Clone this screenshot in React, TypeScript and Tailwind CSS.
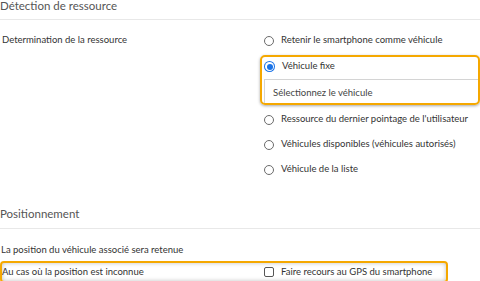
import { useState } from 'react';

const options = [
  'Retenir le smartphone comme véhicule',
  'Véhicule fixe',
  "Ressource du dernier pointage de l'utilisateur",
  'Véhicules disponibles (véhicules autorisés)',
  'Véhicule de la liste',
];

function Radio({ checked }: { checked: boolean }) {
  return checked ? (
    <span className="w-[11px] h-[11px] rounded-full bg-[#1a73e8] flex items-center justify-center shrink-0">
      <span className="w-[9px] h-[9px] rounded-full bg-white flex items-center justify-center">
        <span className="w-[6px] h-[6px] rounded-full bg-[#1a73e8]" />
      </span>
    </span>
  ) : (
    <span className="w-[10px] h-[10px] rounded-full border border-[#6b6b6b] bg-white shrink-0" />
  );
}

export default function App() {
  const [selected, setSelected] = useState(1);
  const [gps, setGps] = useState(false);

  return (
    <div className="w-[480px] h-[281px] overflow-hidden bg-white text-[9.5px] text-[#333] whitespace-nowrap font-['Lato',sans-serif]">
      <div className="h-[20px] border-b border-[#e8e8e8] text-[11.5px] leading-[11px] text-[#555]">
        Détection de ressource
      </div>

      <div className="flex mt-[8px]">
        <div className="w-[260px] shrink-0 h-[25px] flex items-center pl-[2px]">Determination de la ressource</div>
        <div className="flex-1 min-w-0 flex flex-col">
          {options.map((label, i) =>
            i === 1 ? (
              <div
                key={label}
                className="my-[2px] h-[50px] border-2 border-[#f5a800] rounded-[5px] shadow-[0_1px_3px_rgba(0,0,0,0.35)] flex flex-col"
              >
                <div className="h-[22px] pb-[3px] flex items-center gap-[7px] pl-[2px]" onClick={() => setSelected(i)}>
                  <Radio checked={selected === i} />
                  <span>{label}</span>
                </div>
                <div className="ml-[2px] h-[24px] pt-[4px] border-t border-l border-[#d4d4d4] flex items-center pl-[8px] text-[#444]">
                  Sélectionnez le véhicule
                </div>
              </div>
            ) : (
              <div key={label} className="h-[25px] flex items-center gap-[7px] pl-[4px]" onClick={() => setSelected(i)}>
                <Radio checked={selected === i} />
                <span>{label}</span>
              </div>
            ),
          )}
        </div>
      </div>

      <div className="mt-[26px] h-[21px] border-b border-[#e8e8e8] text-[11.5px] leading-[11px] text-[#555]">
        Positionnement
      </div>

      <div className="h-[24px] mt-[9px] flex items-center pl-[1px]">La position du véhicule associé sera retenue</div>

      <div className="-mt-[1px] w-[448px] h-[22px] border-2 border-[#f5a800] rounded-[4px] shadow-[inset_0_0_4px_rgba(0,0,0,0.25)] flex items-center">
        <div className="w-[262px] shrink-0">Au cas où la position est inconnue</div>
        <label className="flex items-center gap-[7px]">
          <input
            type="checkbox"
            checked={gps}
            onChange={(e) => setGps(e.target.checked)}
            className="appearance-none w-[10px] h-[10px] border border-[#555] rounded-[2px] bg-white"
          />
          <span>Faire recours au GPS du smartphone</span>
        </label>
      </div>
    </div>
  );
}
